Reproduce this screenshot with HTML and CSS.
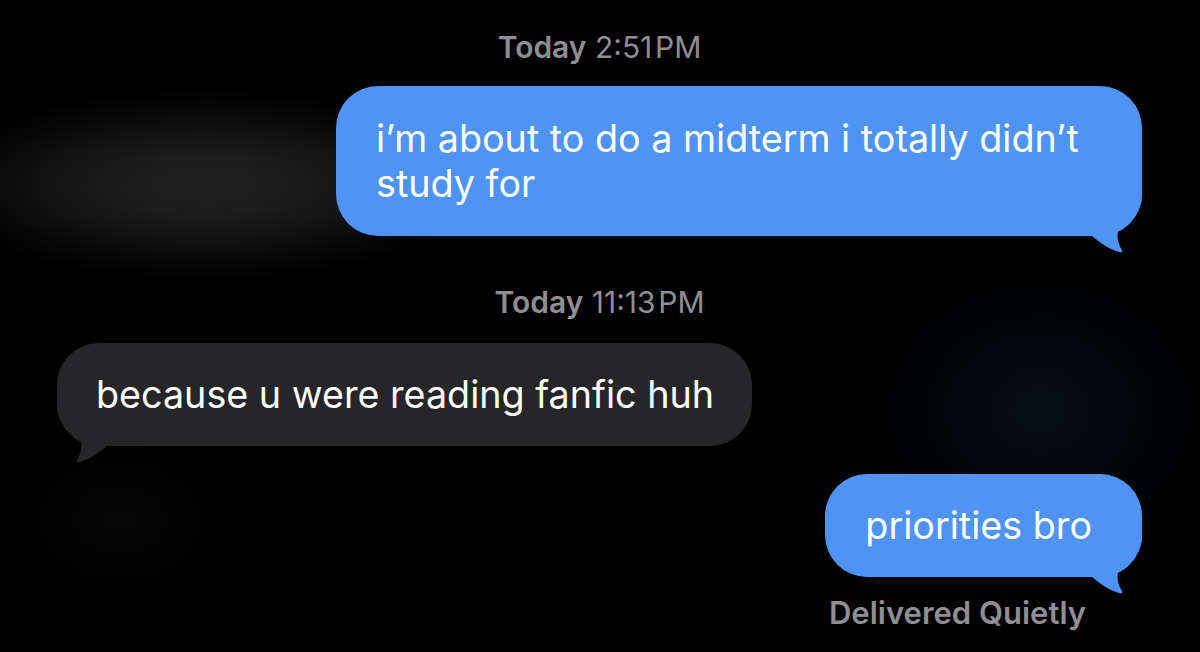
FILE: index.html
```html
<!DOCTYPE html>
<html lang="en">
<head>
<meta charset="utf-8">
<title>Messages</title>
<link rel="stylesheet" href="styles.css">
</head>
<body>
<main class="thread">
  <div class="stamp"><span class="stamp-day">Today</span> 2:51&#8202;PM</div>
  <div class="row row-out row-first">
    <div class="bubble bubble-out bubble-wide">
      <svg class="tail tail-out" viewBox="0 0 50 62" aria-hidden="true"><path d="M0 0H50V4C50 22 37 31 27 37C24 44 26 53 30 59C31 61 29 62 27 61C17 58 8 52 0 45Z"/></svg>
      <span class="bubble-text">i’m about to do a midterm i totally didn’t study for</span>
    </div>
  </div>
  <div class="stamp stamp-second"><span class="stamp-day">Today</span> 11:13&#8202;PM</div>
  <div class="row row-in">
    <div class="bubble bubble-in">
      <svg class="tail tail-in" viewBox="0 0 50 62" aria-hidden="true"><path d="M0 0H50V4C50 22 37 31 27 37C24 44 26 53 30 59C31 61 29 62 27 61C17 58 8 52 0 45Z"/></svg>
      <span class="bubble-text">because u were reading fanfic huh</span>
    </div>
  </div>
  <div class="row row-out row-last">
    <div class="bubble bubble-out">
      <svg class="tail tail-out" viewBox="0 0 50 62" aria-hidden="true"><path d="M0 0H50V4C50 22 37 31 27 37C24 44 26 53 30 59C31 61 29 62 27 61C17 58 8 52 0 45Z"/></svg>
      <span class="bubble-text">priorities bro</span>
    </div>
  </div>
  <div class="status">Delivered Quietly</div>
</main>
</body>
</html>
```
FILE: styles.css
```css
html, body {
  margin: 0;
  padding: 0;
}
body {
  width: 1200px;
  height: 652px;
  overflow: hidden;
  background:
    radial-gradient(ellipse 280px 95px at 205px 185px, #212121 0%, #1c1c1c 30%, #131313 55%, #070707 80%, rgba(0,0,0,0) 100%),
    radial-gradient(ellipse 170px 140px at 1040px 410px, #050e16 0%, rgba(0,0,0,0) 100%),
    radial-gradient(ellipse 120px 90px at 120px 520px, #060606 0%, rgba(0,0,0,0) 100%),
    #000;
  font-family: Inter, "Liberation Sans", Arial, sans-serif;
  color: #fff;
}
.thread {
  display: flex;
  flex-direction: column;
  padding: 30px 58px 0 57px;
}
.stamp {
  text-align: center;
  font-size: 30px;
  line-height: 34px;
  color: #8e8e93;
  font-weight: 400;
}
.stamp-day {
  font-weight: 600;
}
.stamp-second {
  margin-top: 49px;
}
.row {
  display: flex;
}
.row-out {
  justify-content: flex-end;
}
.row-first {
  margin-top: 22px;
}
.row-in {
  margin-top: 24px;
}
.row-last {
  margin-top: 28px;
}
.bubble {
  position: relative;
  font-size: 37.7px;
  line-height: 45px;
  border-radius: 42px;
}
.bubble-text {
  position: relative;
  z-index: 1;
}
.bubble-out {
  background: #4f94f4;
  fill: #4f94f4;
  padding: 29px 50px 29px 40px;
}
.bubble-in {
  background: #262628;
  fill: #262628;
  padding: 29px 38px 29px 39px;
}
.bubble-wide {
  padding: 30px 40px;
  width: 806px;
  box-sizing: border-box;
}
.tail {
  position: absolute;
  width: 50px;
  height: 62px;
  bottom: -17px;
  z-index: 0;
}
.tail-out {
  right: 0;
}
.tail-in {
  left: 0;
  transform: scaleX(-1);
}
.status {
  align-self: flex-end;
  margin-top: 19px;
  margin-right: 56px;
  font-size: 31px;
  line-height: 34px;
  font-weight: 600;
  color: #8e8e93;
}
```
